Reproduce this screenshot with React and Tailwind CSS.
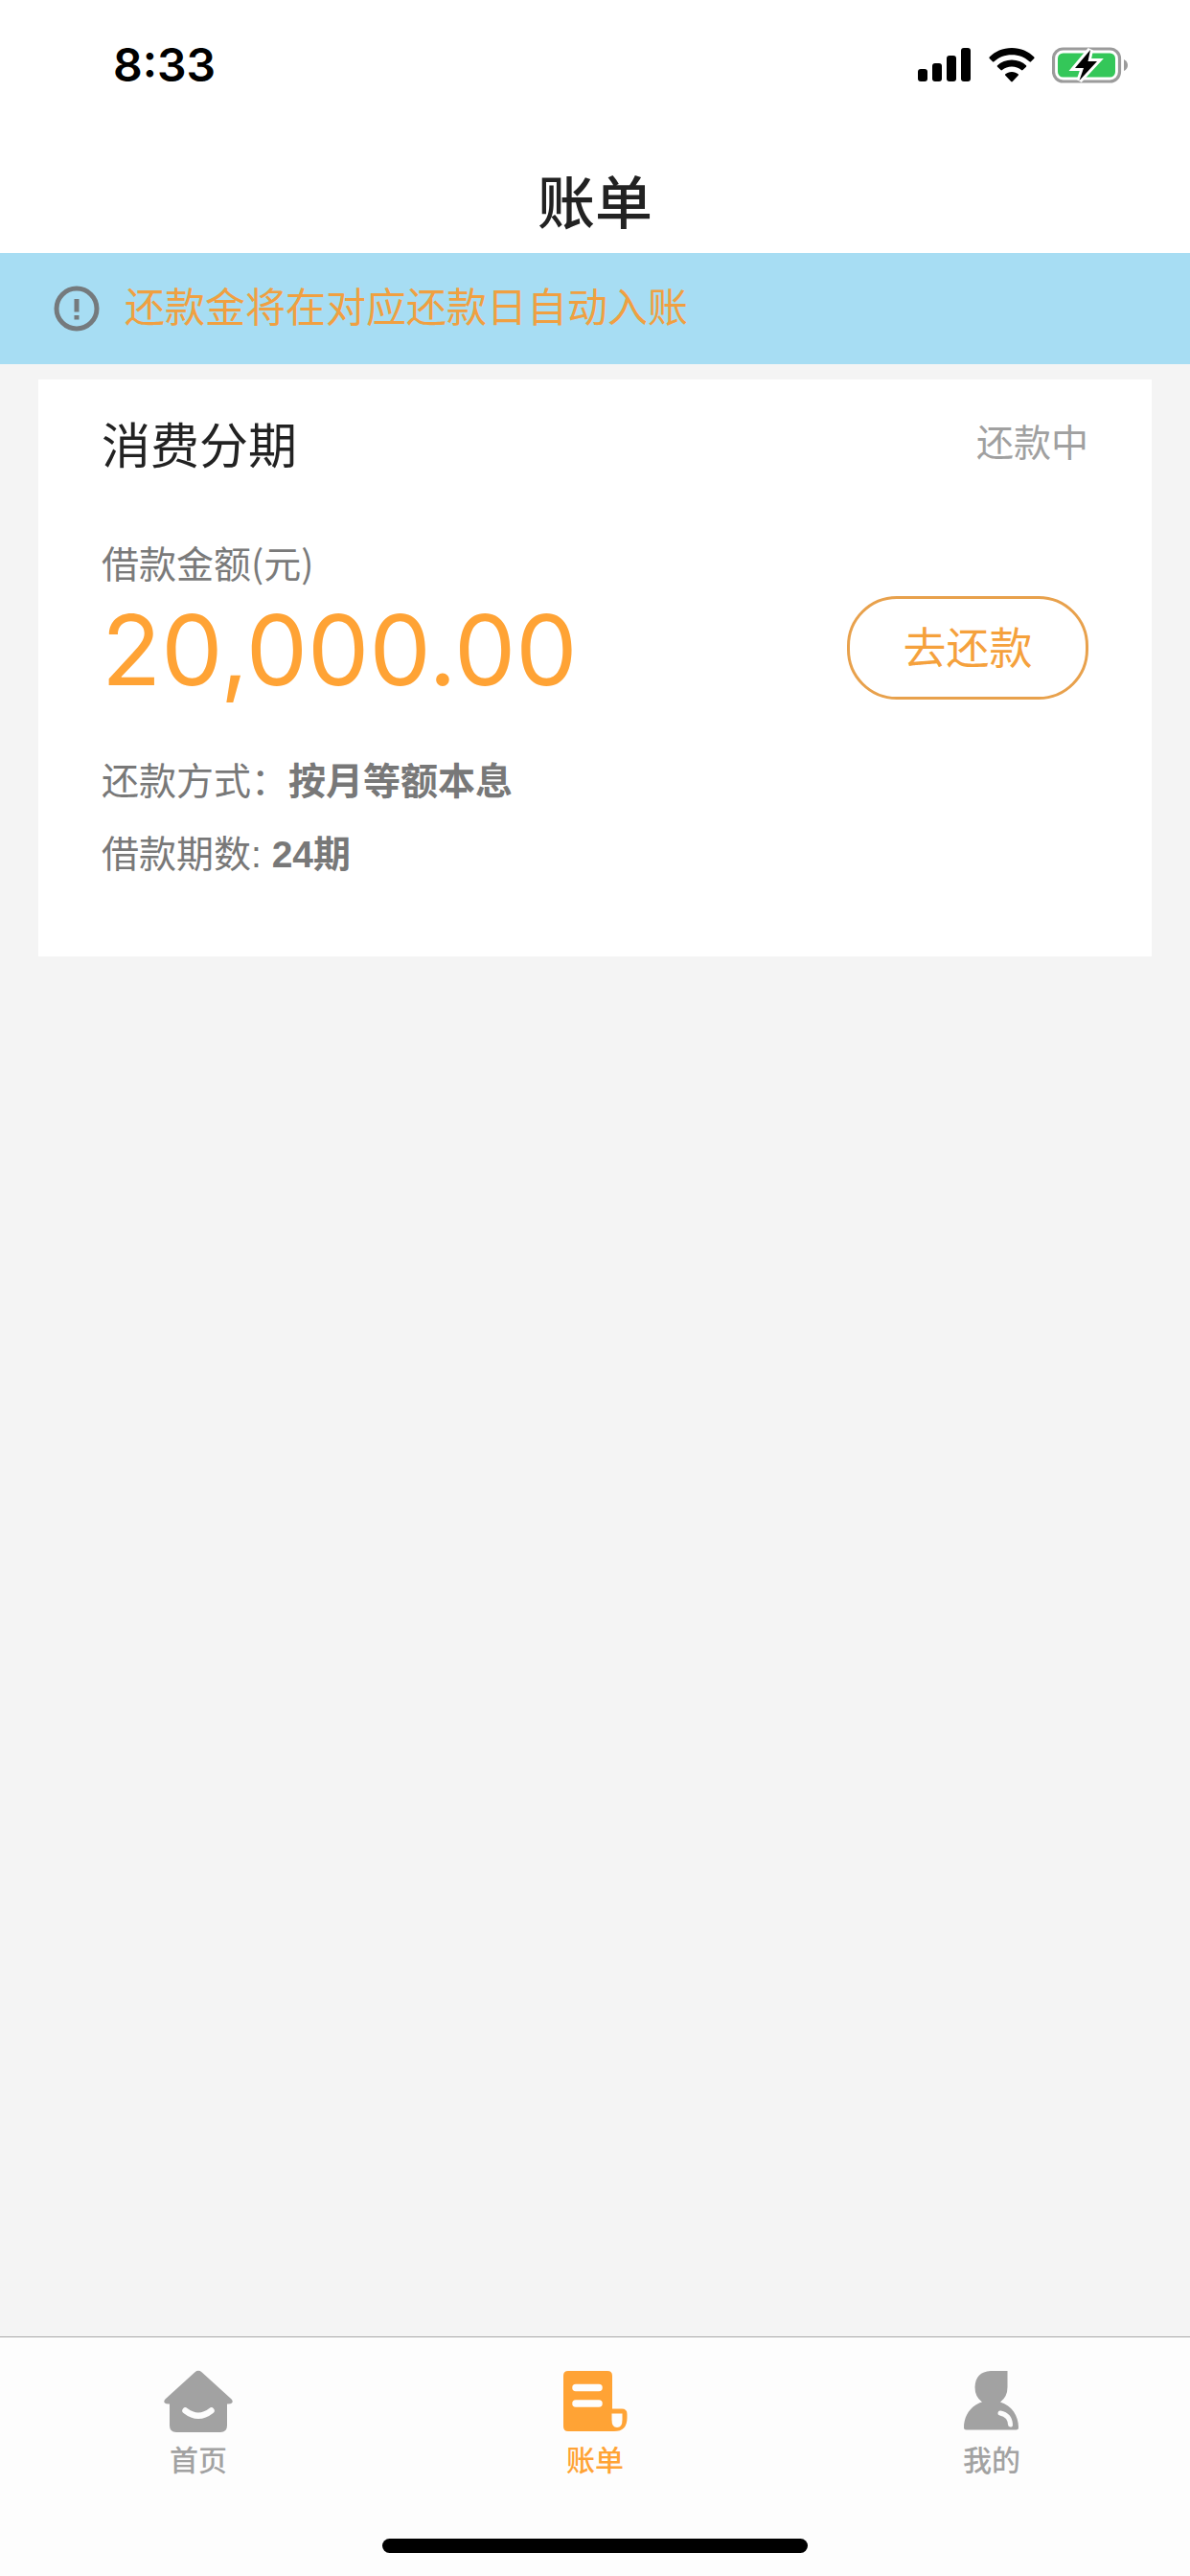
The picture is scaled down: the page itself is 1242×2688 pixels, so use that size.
import React, { useState } from 'react';

const bill = {
  title: '消费分期',
  status: '还款中',
  amount: '20,000.00',
  details: [
    { label: '还款方式：', value: '按月等额本息' },
    { label: '借款期数: ', value: '24期' },
  ],
};

const HomeIcon = () => (
  <svg viewBox="0 0 72 66" className="h-[66px] w-[72px]" aria-hidden="true">
    <path
      d="M32.5 2.2Q36 -0.6 39.5 2.2L70.6 30.6Q72.6 32.8 71 34.6Q70 35.6 66 35.5V58Q66 65 59 65H13Q6 65 6 58V35.5Q2 35.6 1 34.6Q-0.6 32.8 1.4 30.6Z"
      fill="currentColor"
    />
    <path d="M22.5 42.5Q36 53 49.5 42.5" fill="none" stroke="#fdfdfd" strokeWidth="6.5" strokeLinecap="round" />
  </svg>
);

const BillIcon = () => (
  <svg viewBox="0 0 72 66" className="h-[66px] w-[72px]" aria-hidden="true">
    <path
      d="M8 1H49Q54 1 54 6V40.5H64Q69.500 40.500 69.500 46V50Q69.500 64 56 64H8Q3 64 3 59V6Q3 1 8 1Z"
      fill="currentColor"
    />
    <path d="M53.500 45.500H64.500V52Q64.500 60 59 60Q53.500 60 53.500 52Z" fill="#fdfdfd" />
    <path d="M16 18.500H40M16 35H40" fill="none" stroke="#fdfdfd" strokeWidth="7.500" strokeLinecap="round" />
  </svg>
);

const UserIcon = () => (
  <svg viewBox="0 0 72 66" className="h-[66px] w-[72px]" aria-hidden="true">
    <path
      d="M35 1H52.500V18Q52.500 28 45 33.500C57 37 64 48 64 60Q64 62.500 61.500 62.500H9.500Q7 62.500 7 60C7 48 14 37 26 33.500Q18.500 28 18.500 18Q19 2 35 1Z"
      fill="currentColor"
    />
    <path d="M45 45Q55 47 55.500 57" fill="none" stroke="#fdfdfd" strokeWidth="5" strokeLinecap="round" />
  </svg>
);

const tabs = [
  { id: 'home', label: '首页', Icon: HomeIcon },
  { id: 'bill', label: '账单', Icon: BillIcon },
  { id: 'mine', label: '我的', Icon: UserIcon },
];

const StatusBar = () => (
  <div className="flex h-[136px] items-center justify-between pl-[118px] pr-16 text-black">
    <span className="font-['Inter'] text-[48px] leading-none font-semibold">8:33</span>
    <div className="flex items-center gap-[18px]">
      {/* Réseau */}
      <svg viewBox="0 0 56 36" className="h-9 w-14" fill="currentColor" aria-hidden="true">
        <rect x="0" y="22" width="10" height="13" rx="3" />
        <rect x="15" y="16" width="10" height="19" rx="3" />
        <rect x="30" y="8" width="10" height="27" rx="3" />
        <rect x="45" y="0" width="10" height="35" rx="3" />
      </svg>
      {/* Wifi */}
      <svg viewBox="0 0 48 36" className="h-9 w-12" fill="currentColor" aria-hidden="true">
        <path d="M24 0C33.500 0 41.500 3.800 47.300 9.500Q48 10.300 47.300 11L44 14.300Q43.300 15 42.500 14.300C37.500 9.800 31.500 7.200 24 7.200S10.500 9.800 5.500 14.300Q4.700 15 4 14.300L0.700 11Q0 10.300 0.700 9.500C6.500 3.800 14.500 0 24 0Z" />
        <path d="M24 12.500C30 12.500 35 14.700 39 18.300Q39.700 19 39 19.800L35.500 23.100Q34.800 23.800 34 23.100C31.200 20.800 28 19.500 24 19.500S16.800 20.800 14 23.100Q13.200 23.800 12.500 23.100L9 19.800Q8.300 19 9 18.300C13 14.700 18 12.500 24 12.500Z" />
        <path d="M24 25C26.800 25 29 26 30.700 27.300Q31.300 28 30.700 28.700L24.800 35Q24 35.800 23.200 35L17.300 28.700Q16.700 28 17.300 27.300C19 26 21.200 25 24 25Z" />
      </svg>
      {/* Batterie en charge */}
      <svg viewBox="0 0 80 38" className="h-[38px] w-20" aria-hidden="true">
        <rect x="1.500" y="2" width="69" height="34" rx="10" fill="none" stroke="#9b9b9b" strokeWidth="3.200" />
        <rect x="6" y="6.500" width="60" height="25" rx="5.500" fill="#34c759" />
        <path d="M75 13Q79 15 79 19T75 25Z" fill="#9b9b9b" />
        <path d="M40 3L24 22H33L28.500 35L47 15H37.500Z" fill="#000" stroke="#fff" strokeWidth="6" />
        <path d="M40 3L24 22H33L28.500 35L47 15H37.500Z" fill="#000" />
      </svg>
    </div>
  </div>
);

const Notice = () => (
  <div className="flex h-[116px] items-center gap-[26px] bg-[#a7ddf3] pl-14">
    <svg viewBox="0 0 48 48" className="size-12 text-[#757a7d]" aria-hidden="true">
      <circle cx="24" cy="24" r="21" fill="none" stroke="currentColor" strokeWidth="5" />
      <path d="M21.500 14H26.500V27.500H21.500ZM21.500 31H26.500V35.500H21.500Z" fill="currentColor" />
    </svg>
    <p className="pb-2 text-[42px] leading-[56px] text-[#f0a041]">还款金将在对应还款日自动入账</p>
  </div>
);

const BillCard = ({ bill }) => (
  <section className="mx-10 mt-4 bg-white px-[66px] pt-[30px] pb-[68px]">
    <div className="flex items-start justify-between">
      <h2 className="text-[51px] leading-[72px] text-[#222222]">{bill.title}</h2>
      <span className="text-[39px] leading-[66px] text-[#a0a0a0]">{bill.status}</span>
    </div>

    {/* Montant */}
    <p className="mt-[60px] text-[39px] leading-[56px] text-[#7a7a7a]">借款金额(元)</p>
    <div className="mt-2 flex items-center justify-between">
      <span className="pt-1 font-['Inter'] text-[102px] leading-[104px] text-[#ffa335]">{bill.amount}</span>
      <button
        type="button"
        className="h-[108px] w-[252px] rounded-[52px] border-3 border-[#e8a14c] pb-1 text-[45px] text-[#f5a13c]"
      >
        去还款
      </button>
    </div>

    {/* Détails */}
    <dl className="mt-12 font-['Liberation_Sans','Noto_Sans_CJK_SC',sans-serif] text-[39px] leading-[76px] text-[#787878]">
      {bill.details.map((item) => (
        <div key={item.label} className="flex whitespace-pre">
          <dt>{item.label}</dt>
          <dd className="font-bold">{item.value}</dd>
        </div>
      ))}
    </dl>
  </section>
);

const TabBar = ({ active, onChange }) => (
  <nav className="border-t border-[#a8a8a8] bg-[#fdfdfd] pt-[34px] pb-6">
    <div className="grid grid-cols-3">
      {tabs.map(({ id, label, Icon }) => (
        <button
          key={id}
          type="button"
          onClick={() => onChange(id)}
          className={`flex flex-col items-center gap-1.5 ${active === id ? 'text-[#ffa335]' : 'text-[#a2a2a2]'}`}
        >
          <Icon />
          <span className="text-[30px] leading-[40px] font-medium">{label}</span>
        </button>
      ))}
    </div>
    <div className="mx-auto mt-16 h-[15px] w-[444px] rounded-full bg-black" />
  </nav>
);

const App = () => {
  const [activeTab, setActiveTab] = useState('bill');

  return (
    <div className="flex min-h-screen flex-col bg-[#f4f4f4] font-['Noto_Sans_CJK_SC',sans-serif]">
      <header className="bg-white">
        <StatusBar />
        <h1 className="h-32 text-center text-[60px] leading-[144px] font-medium text-[#222222]">账单</h1>
      </header>
      <main className="flex-1">
        <Notice />
        <BillCard bill={bill} />
      </main>
      <TabBar active={activeTab} onChange={setActiveTab} />
    </div>
  );
};

export default App;
